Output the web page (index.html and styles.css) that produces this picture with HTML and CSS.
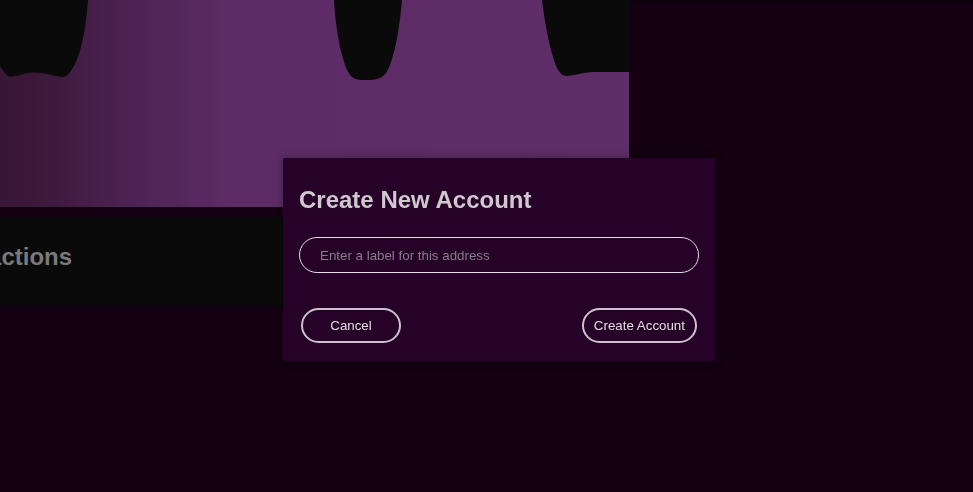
FILE: index.html
```html
<!DOCTYPE html>
<html lang="en">
<head>
<meta charset="utf-8">
<title>Create New Account</title>
<link rel="stylesheet" href="styles.css">
</head>
<body>
<div class="page">
  <main class="main">
    <section class="banner">
      <svg class="drips" width="729" height="82" viewBox="0 0 729 82" aria-hidden="true">
        <g transform="translate(100,0)" fill="#0a0a0a">
          <path d="M -40 0 L 88 0 C 86 30 80 60 70 72 Q 67 77 62 77 C 50 75 40 71 28 73 C 18 75 12 78 8 76 Q 3 72 -2 62 C -10 50 -16 20 -18 0 Z"/>
          <path d="M 334 0 L 402 0 C 399 35 393 62 386 73 Q 381 80 370 80 L 362 80 Q 352 80 348 72 C 342 60 336 35 334 0 Z"/>
          <path d="M 542 0 L 629 0 L 629 72 L 592 72 C 580 73 572 76 567 76 Q 560 76 556 66 C 550 50 545 25 542 0 Z"/>
        </g>
      </svg>
    </section>
    <section class="card">
      <h2 class="card-title">Transactions</h2>
    </section>
  </main>
</div>

<div class="modal" role="dialog" aria-labelledby="modal-title">
  <h2 class="modal-title" id="modal-title">Create New Account</h2>
  <input class="modal-input" type="text" placeholder="Enter a label for this address">
  <div class="modal-actions">
    <button class="btn btn-cancel" type="button">Cancel</button>
    <button class="btn" type="button">Create Account</button>
  </div>
</div>
</body>
</html>
```

FILE: styles.css
```css
html, body {
  margin: 0;
  padding: 0;
}

body {
  background: linear-gradient(#0b000a 0, #120011 4px, #130012 12px);
  font-family: "Liberation Sans", Arial, sans-serif;
  width: 973px;
  height: 492px;
  overflow: hidden;
}

.page {
  height: 492px;
  overflow: hidden;
}

.main {
  margin-left: -100px;
  width: 729px;
  display: flex;
  flex-direction: column;
  gap: 10px;
}

.banner {
  height: 207px;
  background: linear-gradient(90deg, #2c0f2b 0%, #3b1839 18%, #4d2353 32%, #5d2c66 46%, #5f2e68 100%);
}

.drips {
  display: block;
}

.card {
  box-sizing: border-box;
  height: 89px;
  background: #0a0a0a;
  padding: 26px 24px 0;
}

.card-title {
  margin: 0;
  font-size: 24px;
  font-weight: 700;
  line-height: 28px;
  color: #7a7a7a;
}

.modal {
  position: fixed;
  left: 283px;
  top: 158px;
  width: 432px;
  height: 203px;
  box-sizing: border-box;
  padding: 16px;
  background: #260229;
  border-radius: 2px;
  box-shadow: 0 0 8px rgba(0, 0, 0, 0.35);
  display: flex;
  flex-direction: column;
}

.modal-title {
  margin: 12px 0 0;
  font-size: 24px;
  font-weight: 700;
  color: #cfc9cf;
}

.modal-input {
  margin-top: 23px;
  box-sizing: border-box;
  width: 400px;
  height: 36px;
  padding: 0 20px;
  border: 1px solid #e4dde4;
  border-radius: 18px;
  background: transparent;
  color: #e0dae0;
  font-family: "Liberation Sans", Arial, sans-serif;
  font-size: 13.333px;
  outline: none;
}

.modal-input::placeholder {
  color: #877d88;
}

.modal-actions {
  margin-top: 35px;
  display: flex;
  justify-content: space-between;
}

.btn {
  margin: 0 2px;
  box-sizing: border-box;
  height: 35px;
  padding: 0 10px;
  border: 2px solid #cbc3cb;
  border-radius: 18px;
  background: transparent;
  color: #e2dce2;
  font-family: "Liberation Sans", Arial, sans-serif;
  font-size: 13.333px;
  cursor: pointer;
}

.btn-cancel {
  width: 100px;
}
```
